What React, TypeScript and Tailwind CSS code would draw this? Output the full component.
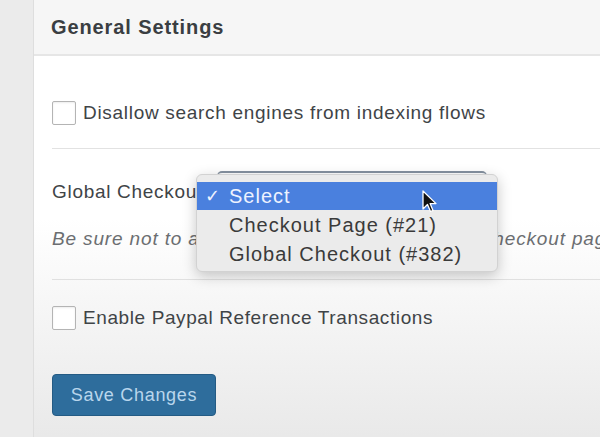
import React from 'react';

const font = { fontFamily: '"Liberation Sans", Arial, sans-serif' };

function Checkbox() {
  return <span className="inline-block w-[24px] h-[24px] shrink-0 rounded-[2px] border border-[#b4b4b4] bg-white shadow-[inset_0_1px_2px_rgba(0,0,0,0.08)]" />;
}

function Cursor() {
  return (
    <svg width="16" height="24" viewBox="0 0 16 24" className="absolute left-[421px] top-[190px]">
      <path d="M2 1 L2 19 L6.5 14.5 L9.5 21.5 L12 20.4 L9.1 13.6 L15 13.6 Z" fill="#111" stroke="#fff" strokeWidth="1.3" strokeLinejoin="round" />
    </svg>
  );
}

export default function App() {
  const options = ['Checkout Page (#21)', 'Global Checkout (#382)'];

  return (
    <div className="relative w-[600px] h-[437px] flex overflow-hidden bg-[#ebebeb] text-[#3f4447]" style={font}>
      <div className="w-[33px] shrink-0" />
      <div className="flex-1 min-w-0 flex flex-col border-l border-[#dedede] bg-gradient-to-b from-white via-white to-[#e9e9e9]">
        <div className="h-[56px] shrink-0 flex items-center pl-[17px] bg-[#f6f6f6] border-b-2 border-[#e6e6e6]">
          <h2 className="text-[20px] font-bold tracking-[0.9px] text-[#3a3e42]">General Settings</h2>
        </div>

        <div className="pl-[18px]">
          <div className="pt-[45px] pb-[23px] border-b border-[#e2e2e2] flex items-center gap-[7px]">
            <Checkbox />
            <span className="text-[19px] tracking-[0.7px] leading-[24px]">Disallow search engines from indexing flows</span>
          </div>

          <div className="pt-[22px] pb-[28px] border-b border-[#e0e0e0]">
            <div className="flex items-center h-[42px]">
              <span className="w-[165px] shrink-0 text-[19px] tracking-[0.7px] whitespace-nowrap">Global Checkout</span>
              <div className="w-[270px] h-[42px] rounded-t-[5px] border-t-2 border-[#8592a0] bg-white" />
            </div>
            <p className="mt-[14px] text-[19px] italic tracking-[0.85px] text-[#6b6e71] leading-[24px] whitespace-nowrap overflow-hidden">
              Be sure not to add any products to the Global Checkout page.
            </p>
          </div>

          <div className="pt-[26px] flex items-center gap-[7px]">
            <Checkbox />
            <span className="text-[19px] tracking-[0.6px] leading-[24px]">Enable Paypal Reference Transactions</span>
          </div>

          <button className="mt-[44px] w-[164px] h-[42px] rounded-[4px] bg-[#2e6d9c] border border-[#245b84] text-[18px] tracking-[0.7px] text-[#b9d6ec]">
            Save Changes
          </button>
        </div>
      </div>

      <div className="absolute left-[196px] top-[174px] w-[302px] h-[98px] pt-[7px] rounded-[6px] bg-[#ebebeb] border border-[#d2d2d2] shadow-[0_4px_14px_rgba(0,0,0,0.22)]">
        <div className="h-[28px] flex items-center bg-[#4a80de] text-[#eef3ff]">
          <span className="w-[32px] pl-[8px] text-[18px]">✓</span>
          <span className="text-[20px] tracking-[1px]">Select</span>
        </div>
        {options.map(o => (
          <div key={o} className="h-[29px] flex items-center pl-[32px] text-[20px] tracking-[1px] text-[#3a3a3a]">
            {o}
          </div>
        ))}
      </div>
      <Cursor />
    </div>
  );
}
